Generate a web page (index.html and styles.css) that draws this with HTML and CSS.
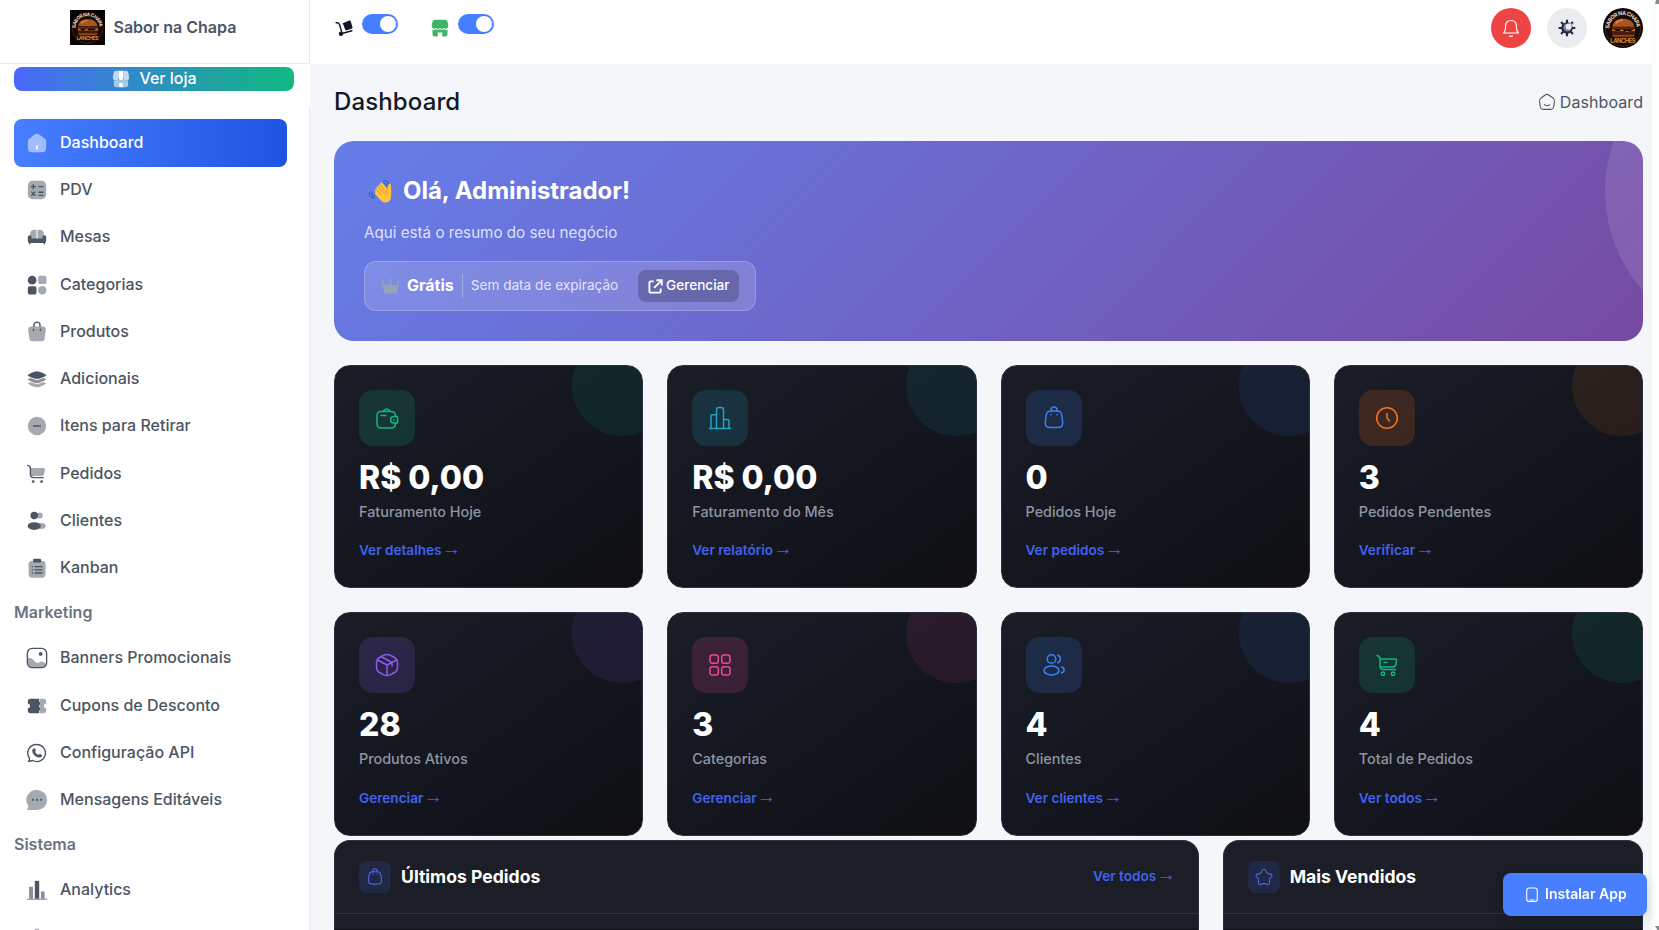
FILE: index.html
```html
<!DOCTYPE html>
<html lang="pt-BR">
<head>
<meta charset="utf-8">
<title>Dashboard - Sabor na Chapa</title>
<link rel="stylesheet" href="styles.css">
</head>
<body>
<svg class="defs" aria-hidden="true">
  <defs>
    <path id="arc" d="M9.500 31a20.500 20.500 0 0 1 41 0"/>
    <symbol id="logo" viewBox="0 0 60 60">
      <rect width="60" height="60" fill="#080504"/>
      <circle cx="30" cy="31" r="26.500" fill="#160b06" stroke="#4a1f12" stroke-width="1.500"/>
      <text class="logo-arc"><textPath href="#arc" textLength="62">SABOR NA CHAPA</textPath></text>
      <path d="M14 28c1-9 8-12 16-12s16 3 17 12z" fill="#a8561f"/>
      <path d="M19 23c3-4 7-5 11-5" stroke="#d8924e" stroke-width="2" fill="none"/>
      <path d="M13 29h35v3H13z" fill="#6d2410"/>
      <path d="M14 31l8 5 6-4 8 5 12-6v4H14z" fill="#c9822a"/>
      <path d="M13 36h35v4H13z" fill="#4a170c"/>
      <path d="M14 40h33c0 4-4 6-8 6H22c-4 0-8-2-8-6z" fill="#8f4519"/>
      <path d="M9 43h42v10H9z" fill="#160b06" opacity=".75"/>
      <text x="30" y="52" text-anchor="middle" textLength="38" class="logo-name">LANCHES</text>
    </symbol>
    <symbol id="bag" viewBox="0 0 24 24">
      <path d="M3.700 12.500c.4-3.600.6-5.400 1.900-6.500S8.700 5 12 5s5.100-.1 6.400 1 1.500 2.900 1.900 6.500c.5 4.200.7 6.300-.5 7.700S16.600 21.500 12 21.500s-6.600.1-7.800-1.300-.9-3.500-.5-7.700z"/>
      <path d="M9 5V4a3 3 0 0 1 6 0v1M9 8.500v.2M15 8.500v.2"/>
    </symbol>
  </defs>
</svg>

<div class="app">
  <aside class="sidebar">
    <div class="brand"><svg class="brand-logo"><use href="#logo"/></svg><span>Sabor na Chapa</span></div>
    <div class="store-wrap">
      <a class="store-btn">
        <svg class="ic18" viewBox="0 0 24 24" fill="#fff"><path opacity=".7" d="M6 1h3v9a3.800 3.800 0 0 1-7.800 0L2 4.500C2.500 2 3.500 1 6 1zM15 1h3c2.500 0 3.500 1 4 3.500l.8 5.500A3.800 3.800 0 0 1 15 10z"/><path d="M9 1h6v9.500a3 3 0 0 1-6 0zM9.500 17h5v6h-5z"/><path opacity=".55" d="M2.500 13.800c2 .6 5 .3 6.500-1.500 1.500 1.700 4.500 1.700 6 0 1.500 1.800 4.500 2.100 6.500 1.500V19c0 3-1 4-4 4h-3v-6h-5v6h-3c-3 0-4-1-4-4z"/></svg>
        <span>Ver loja</span>
      </a>
    </div>
    <nav class="menu">
      <a class="item active"><svg viewBox="0 0 24 24"><path class="soft" fill-rule="evenodd" d="M2 12c0-3 .3-4 2.500-5.500l4-3C10 2.300 10.500 2 12 2s2 .3 3.500 1.500l4 3C21.700 8 22 9 22 12v4c0 5-1.200 6-6 6H8c-4.800 0-6-1-6-6z"/><path d="M11.100 14.500h1.800V19h-1.800z"/></svg><span>Dashboard</span></a>
      <a class="item"><svg viewBox="0 0 24 24"><rect class="soft" x="2" y="2" width="20" height="20" rx="5"/><path class="line" d="M5.800 8.300h4.400M8 6.100v4.400M14 8.300h4.500M6.400 14.300l3.200 3.400M9.600 14.300l-3.200 3.400M14 14.500h4.500M14 17.800h4.500"/></svg><span>PDV</span></a>
      <a class="item"><svg viewBox="0 0 24 24"><path class="soft" d="M4.500 11V8.500a4.500 4.500 0 0 1 4.500-4.500h2.400v11H6.500zM12.600 4H15a4.500 4.500 0 0 1 4.500 4.500V11l-2 4h-4.900z"/><path d="M2 12a2 2 0 0 1 4 0v1.500h12V12a2 2 0 0 1 4 0v4c0 1-.4 1.800-1.200 2.200V20h-1.600v-1.500H4.800V20H3.200v-1.800C2.400 17.800 2 17 2 16z"/></svg><span>Mesas</span></a>
      <a class="item"><svg viewBox="0 0 24 24"><circle cx="6.700" cy="6.700" r="4.700"/><rect class="soft" x="13.300" y="2" width="9" height="9" rx="2"/><rect x="2" y="13.300" width="9.400" height="9" rx="2"/><circle class="soft" cx="17.700" cy="17.700" r="4.600"/></svg><span>Categorias</span></a>
      <a class="item"><svg viewBox="0 0 24 24"><path class="soft" d="M2.500 11c-.4-3.500.5-5 4-5h11c3.500 0 4.400 1.500 4 5l-1.200 8c-.4 2.300-1 3-3.300 3H7c-2.300 0-2.900-.7-3.300-3z"/><path class="line" d="M8.700 6V4.500a3.300 3.300 0 0 1 6.600 0V6M8.200 9v1.400M15.800 9v1.400"/></svg><span>Produtos</span></a>
      <a class="item"><svg viewBox="0 0 24 24"><path class="soft" d="M2 16.500l3-1 7 2.300 7-2.300 3 1c0 1.200-7.500 4.500-10 4.500S2 17.700 2 16.500z"/><path class="mid" d="M2 12l3-1 7 2.300 7-2.300 3 1c0 1.500-7.500 4.500-10 4.500S2 13.500 2 12z"/><path d="M2 8c0-1.300 7.500-4.500 10-4.500S22 6.700 22 8s-7.500 4-10 4S2 9.300 2 8z"/></svg><span>Adicionais</span></a>
      <a class="item"><svg viewBox="0 0 24 24"><circle class="soft" cx="12" cy="12" r="10"/><path class="line" d="M8.300 12h7.400"/></svg><span>Itens para Retirar</span></a>
      <a class="item"><svg viewBox="0 0 24 24"><path class="soft" d="M4.800 5.500h13.700c2 0 2.600 1 2 3l-1.200 4.200c-.4 1.300-1 1.600-2.300 1.600H5z"/><path class="line" d="M1.800 2.600c2.300.3 3 1 3 3.400v6c0 3 .8 3.900 3.700 3.900h10.200"/><circle cx="7.800" cy="20.200" r="1.500"/><circle cx="17" cy="20.200" r="1.500"/></svg><span>Pedidos</span></a>
      <a class="item"><svg viewBox="0 0 24 24"><circle class="soft" cx="15" cy="6" r="3.200"/><ellipse class="soft" cx="16.500" cy="17.500" rx="5" ry="3.200"/><circle cx="9" cy="6" r="4.100"/><ellipse cx="9" cy="17.500" rx="7.200" ry="4.200"/></svg><span>Clientes</span></a>
      <a class="item"><svg viewBox="0 0 24 24"><rect class="soft" x="2.800" y="4" width="18.600" height="18.500" rx="4"/><rect x="7.800" y="2" width="8.600" height="4" rx="1.300"/><path class="line" d="M10 10.500h7.500M10 14h7.500M10 17.500h7.500M6.800 10.500h.3M6.800 14h.3M6.800 17.500h.3"/></svg><span>Kanban</span></a>
      <h6 class="section">Marketing</h6>
      <a class="item"><svg viewBox="0 0 24 24"><path class="soft" d="M2 12.500c3-1.500 5.500.2 8 3.500 1.800 1.700 2.800 1.600 5 .5 3-1.500 4.500-.2 6.800 2.200-1 3-3.800 3.800-9.800 3.800-8 0-10-1.500-10-10z"/><rect class="line" x="1.500" y="1.500" width="21" height="21" rx="5.500"/><circle cx="16" cy="7.500" r="2.100"/></svg><span>Banners Promocionais</span></a>
      <a class="item"><svg viewBox="0 0 24 24"><path class="soft" d="M15.300 4H19a3 3 0 0 1 3 3v2.500a2.500 2.500 0 0 0 0 5V17a3 3 0 0 1-3 3h-3.700z"/><path d="M5 4h9.500v3.500h.8v3h-.8v3h.8v3h-.8V20H5a3 3 0 0 1-3-3v-2.500a2.500 2.500 0 0 0 0-5V7a3 3 0 0 1 3-3z"/></svg><span>Cupons de Desconto</span></a>
      <a class="item"><svg viewBox="0 0 24 24"><path class="line" d="M12 2.700a9.300 9.300 0 1 1-4.500 17.500c-1.500 0-3 1-4.500 1 .8-1.500 1-2.500.6-4A9.300 9.300 0 0 1 12 2.700z"/><path d="M8.700 6.800c1-.3 1.500.5 2 2 .4 1-.8 1.300-.6 2 .6 1.400 1.800 2.500 3.200 3 .8.200 1-1 1.900-.8 1.500.5 2.600 1 2.300 1.900-.7 2.300-3 2.600-5.500 1.500-3-1.400-5-4-5.200-6.700 0-1.500.7-2.500 1.900-2.900z"/></svg><span>Configuração API</span></a>
      <a class="item"><svg viewBox="0 0 24 24"><path class="soft" d="M12 1a11 11 0 0 1 0 22H1.500c-.5 0-.5-.6 0-1.200.9-1 1.400-2.300.8-3.700A11 11 0 0 1 12 1z"/><path d="M6.500 10.700h2v2h-2zM11 10.700h2v2h-2zM15.500 10.700h2v2h-2z"/></svg><span>Mensagens Editáveis</span></a>
      <h6 class="section">Sistema</h6>
      <a class="item"><svg viewBox="0 0 24 24"><path class="mid" d="M3.300 8.500h4.300v13H3.300zM16.300 13.500h4v8h-4z"/><path d="M9.600 2h4.800v19.500H9.600z"/><path class="mid" d="M1 21.500h22v1.200H1z"/></svg><span>Analytics</span></a>
      <a class="item last"><svg viewBox="0 0 24 24"><path class="soft" d="M10 1.800h4l1.200 3.200 3 1.500 3-.5 1 4v5l-3 6-7 1-8-2-3-5V8l5-2 2.600-1z"/></svg><span>Configurações</span></a>
    </nav>
  </aside>

  <div class="main">
    <header class="topbar">
      <div class="switches">
        <div class="switch-group">
          <svg class="ic18 trolley" viewBox="0 0 24 24" fill="#111827"><path d="M10 5.500l8.500-3.200c1.500-.5 2.300 0 2.700 1.300l2 7c.4 1.400 0 2-1.300 2.500l-6 1.900c-1.300.4-2 .2-2.500-1.200l-2.300-6z"/><path d="M1.500 5c3-.3 4 .5 4.600 2.500l2.600 9M10.500 19l12-3.300" fill="none" stroke="#111827" stroke-width="2" stroke-linecap="round"/><circle cx="8" cy="19.700" r="3"/></svg>
          <span class="switch"></span>
        </div>
        <div class="switch-group">
          <svg class="ic18 shop" viewBox="0 0 24 24" fill="#42b36b"><path d="M5 1h14c2 0 2.800 1.300 3.300 3.500l.9 5.300a3.500 3.500 0 0 1-5.700 2.200 4 4 0 0 1-5.500 0 4 4 0 0 1-5.500 0 3.500 3.500 0 0 1-5.700-2.200l.9-5.300C2.200 2.300 3 1 5 1z"/><path d="M2 14.300c1.500.4 3 .2 4.500-.6 1.800.9 3.700.9 5.500 0 1.800.9 3.700.9 5.500 0 1.500.8 3 1 4.500.6V20c0 2.300-1 3.300-3.500 3.300H15V18H9v5.300H5.500C3 23.300 2 22.300 2 20z"/></svg>
          <span class="switch"></span>
        </div>
      </div>
      <div class="actions">
        <button class="round bell"><svg viewBox="0 0 24 24"><path d="M3 18c2-1.500 2.500-3.500 2.500-8C5.500 5.500 8 3 12 3s6.500 2.500 6.500 7c0 4.500.5 6.500 2.500 8zM10.300 21.500c1 .7 2.400.7 3.400 0"/></svg></button>
        <button class="round theme"><svg viewBox="0 0 24 24"><path d="M12 2v4M12 18v4M2 12h4M18 12h4M4.900 4.900l2.500 2.500M16.600 16.600l2.500 2.500M4.900 19.100l2.500-2.500M17.300 6.700l1.800-1.800" stroke="#1e2640" stroke-width="2.600"/><circle cx="12" cy="12" r="7" fill="#1e2640"/><circle cx="12.500" cy="11.500" r="4.800" fill="#76809a"/><circle cx="14" cy="10.300" r="3.700" fill="#ebecef"/></svg></button>
        <div class="round avatar"><svg viewBox="0 0 60 60"><use href="#logo"/></svg></div>
      </div>
    </header>

    <main class="content">
      <div class="page-head">
        <h1>Dashboard</h1>
        <div class="crumb"><svg viewBox="0 0 24 24"><path d="M5 6l4.500-3.300c1.800-1.300 3.200-1.300 5 0L19 6c3 2.200 3.300 3 2.800 6.500l-.7 5c-.5 3.500-1.300 4.300-5 4.300H7.900c-3.700 0-4.500-.8-5-4.300l-.7-5C1.700 9 2 8.200 5 6zM8.500 15.500c2 1.700 5 1.700 7 0"/></svg><span>Dashboard</span></div>
      </div>

      <section class="hero">
        <h2><svg class="wave" viewBox="0 0 28 28"><path d="M1.500 15.500c0 3.500 2 5.500 5.500 6M4 14.500c0 2.500 1.300 4 3.500 4.500M18 2c3 0 5 2 5 5M17 4.500c2 .2 3.300 1.300 3.700 3" fill="none" stroke="#2166b5" stroke-width="1.300" stroke-linecap="round"/><path d="M8 17l7 7.500c3 3 8 2.300 10-1.200 1.200-2.200 1-5.500 1-8.800l-.2-7.500c-.2-2.400-3-2.200-3.200 0l-.6 4.500-5.600-7c-1.400-1.500-3.600.2-2.500 1.900-1.500-1-3.300.6-2.200 2.200-1.600-.7-3.100 1-2 2.500-1.600-.2-2.500 1.500-1.400 2.800z" fill="#ffc23d"/><path d="M13.500 6.500l5 6.500M11.500 9l5 6M9.500 11.500l4.600 5.500M21.800 12c-2 1.500-2.500 3.500-1.800 5.500" stroke="#d8922a" stroke-width="1" fill="none" stroke-linecap="round"/></svg><span>Olá, Administrador!</span></h2>
        <p>Aqui está o resumo do seu negócio</p>
        <div class="plan">
          <svg class="crown" viewBox="0 0 20 18"><path d="M3.500 16.500L1 5.500l4.500 3L7 6l1 2.500L10 3l2 5.500L13 6l1.500 2.500 4.500-3-2.500 11z" fill="#94a3b8"/><circle cx="1.700" cy="4.200" r="1.400" fill="#94a3b8"/><circle cx="10" cy="2.500" r="1.400" fill="#94a3b8"/><circle cx="18.300" cy="4.200" r="1.400" fill="#94a3b8"/></svg>
          <strong>Grátis</strong>
          <span class="expires">Sem data de expiração</span>
          <a class="manage"><svg viewBox="0 0 16 16"><path d="M6 2.500H2.800a1.300 1.300 0 0 0-1.300 1.300v9.400a1.300 1.300 0 0 0 1.300 1.300h9.400a1.300 1.300 0 0 0 1.300-1.300V10M9 1.300h5.700V7M14.300 1.700L6.500 9.500"/></svg><span>Gerenciar</span></a>
        </div>
      </section>

      <section class="stats">
        <article class="card green"><div class="tile"><svg viewBox="0 0 24 24"><path d="M20.500 10.500c0-3.500-1.200-5-4.500-5H7c-4 0-5 1-5 5v6.500c0 4 1 5 5 5h9c3.300 0 4.500-1.500 4.500-5M6 9.500h5M7.500 5.500L10 3.600c1.300-1 2.200-1 3.500 0L16 5.500M22.500 10.500h-3.700a3.200 3.200 0 0 0 0 6.400h3.700zM18.700 13.700h.3"/></svg></div><div class="value">R$ 0,00</div><div class="label">Faturamento Hoje</div><a class="link">Ver detalhes <i>→</i></a></article>
        <article class="card cyan"><div class="tile"><svg viewBox="0 0 24 24"><path d="M1.500 22.500h21M3 22.500V10.300C3 9.300 3.500 8.800 4.500 8.800h4M8.500 22.500V4c0-2 .5-2.500 2.500-2.500h2c2 0 2.500.5 2.500 2.500v18.500M15.500 13.500H19c1.500 0 2 .5 2 2v7"/></svg></div><div class="value">R$ 0,00</div><div class="label">Faturamento do Mês</div><a class="link">Ver relatório <i>→</i></a></article>
        <article class="card blue"><div class="tile"><svg><use href="#bag"/></svg></div><div class="value">0</div><div class="label">Pedidos Hoje</div><a class="link">Ver pedidos <i>→</i></a></article>
        <article class="card orange"><div class="tile"><svg viewBox="0 0 24 24"><circle cx="12" cy="12" r="10.300"/><path d="M12 7.500V12l2.500 3"/></svg></div><div class="value">3</div><div class="label">Pedidos Pendentes</div><a class="link">Verificar <i>→</i></a></article>
        <article class="card purple"><div class="tile"><svg viewBox="0 0 24 24"><path d="M15.600 2.400l3 1.600C22 5.700 22.500 7 22.500 10.500v3c0 3.500-.5 4.800-3.900 6.500l-3 1.600c-3 1.600-4.200 1.600-7.200 0l-3-1.600C2 18.300 1.500 17 1.500 13.500v-3C1.500 7 2 5.700 5.400 4l3-1.600c3-1.600 4.200-1.600 7.200 0zM21.500 7L12 12 2.500 7M12 12v10.500M17 9.500v3.500M17 9.500L7 4"/></svg></div><div class="value">28</div><div class="label">Produtos Ativos</div><a class="link">Gerenciar <i>→</i></a></article>
        <article class="card pink"><div class="tile"><svg viewBox="0 0 24 24"><rect x="2" y="2" width="8.300" height="8.300" rx="2.300"/><rect x="13.700" y="2" width="8.300" height="8.300" rx="2.300"/><rect x="2" y="13.700" width="8.300" height="8.300" rx="2.300"/><rect x="13.700" y="13.700" width="8.300" height="8.300" rx="2.300"/></svg></div><div class="value">3</div><div class="label">Categorias</div><a class="link">Gerenciar <i>→</i></a></article>
        <article class="card blue"><div class="tile"><svg viewBox="0 0 24 24"><circle cx="9.500" cy="6" r="4.300"/><ellipse cx="9.500" cy="17.500" rx="7.500" ry="4.500"/><path d="M15.800 2.200a4 4 0 0 1 0 7.500M19.500 14c3.300.7 3.700 4.500 0 6"/></svg></div><div class="value">4</div><div class="label">Clientes</div><a class="link">Ver clientes <i>→</i></a></article>
        <article class="card green"><div class="tile"><svg viewBox="0 0 24 24"><path d="M2 2.500c2.500.5 3 1.500 3 4v5.500c0 4 .8 4.500 4.500 4.500h11M5 6h14.500c2 0 2.500.8 2 2.800l-.8 3.200c-.5 1.500-1 2-2.500 2H5.500M9 9.500h3"/><circle cx="8" cy="20.700" r="1.700"/><circle cx="18" cy="20.700" r="1.700"/></svg></div><div class="value">4</div><div class="label">Total de Pedidos</div><a class="link">Ver todos <i>→</i></a></article>
      </section>

      <section class="panels">
        <article class="panel">
          <header><div class="mini"><svg><use href="#bag"/></svg></div><h3>Últimos Pedidos</h3><a class="link">Ver todos <i>→</i></a></header>
          <div class="panel-body"></div>
        </article>
        <article class="panel">
          <header><div class="mini"><svg viewBox="0 0 24 24"><path d="M8.500 5.500c1.800-5 5.200-5 7 0 .4 1.300 1 1.800 2.500 2 5.300.7 6 2.500 2.500 5.800-1.300 1.300-1.500 2-1.200 4 .8 5-1 6-5 3.800-1.600-.8-3-.8-4.600 0-4 2.200-5.800 1.200-5-3.800.3-2 .1-2.700-1.200-4C0 10 .7 8.200 6 7.500c1.500-.2 2.100-.7 2.500-2z"/></svg></div><h3>Mais Vendidos</h3></header>
          <div class="panel-body"></div>
        </article>
      </section>
    </main>
  </div>
  <div class="scroll"><span class="tri up"></span><span class="tri down"></span></div>
</div>

<button class="install"><svg viewBox="0 0 12 16"><rect x=".7" y="1" width="10.600" height="13.500" rx="2.600"/><path d="M3.500 13h5"/></svg><span>Instalar App</span></button>
</body>
</html>
```
FILE: styles.css
```css
* { box-sizing: border-box; }
body { margin: 0; height: 930px; overflow: hidden; background: #f5f6fa; font-family: Inter, "Liberation Sans", sans-serif; font-size: 16px; color: #4b5563; }
h1, h2, h3, h6, p { margin: 0; }
button { border: 0; padding: 0; font-family: inherit; }
svg { display: block; flex: none; }
.defs { position: absolute; width: 0; height: 0; }
.ic18 { width: 18px; height: 18px; }
.logo-arc { font-size: 8px; font-weight: 700; fill: #e8dccb; }
.logo-name { font-size: 9px; font-weight: 700; fill: #d58a34; }

.app { display: flex; height: 930px; overflow: hidden; }

/* Sidebar */
.sidebar { width: 310px; flex: none; display: flex; flex-direction: column; height: 930px; overflow: hidden; background: #fff; }
.brand { height: 64px; flex: none; display: flex; align-items: flex-start; gap: 8.500px; padding: 10px 0 0 70px; border-right: 1px solid #e8e9ee; border-bottom: 1px solid #e8e9ee; font-weight: 600; line-height: 35px; }
.brand-logo { width: 35px; height: 35px; }
.store-wrap { height: 43px; flex: none; padding: 3px 16px 0 14px; }
.store-btn { height: 24px; display: flex; align-items: center; justify-content: center; gap: 9px; padding-left: 1px; border-radius: 8px; background: linear-gradient(90deg, #4a68fa, #10b981); color: #fff; font-weight: 500; line-height: 22px; }
.store-btn span { padding-bottom: 2px; }
.menu { flex: 1; min-height: 0; padding: 12.300px 22px 0 14px; border-right: 1px solid #e8ebf2; }
.item { height: 47.250px; display: flex; align-items: center; gap: 12px; padding: 0 12px; border-radius: 8px; font-weight: 500; line-height: 24px; white-space: nowrap; }
.item svg { width: 22px; height: 22px; fill: #4b5563; }
.item span { padding-bottom: 2px; }
.item.last span { padding-bottom: 0; }
.item.active { color: #fff; background: linear-gradient(90deg, #487fff, #1e54e2); }
.item.active svg { fill: #fff; }
.item .soft { opacity: .5; }
.item .mid { opacity: .65; }
.item .line { fill: none; stroke: #4b5563; stroke-width: 1.500; stroke-linecap: round; }
.section { height: 43px; line-height: 41px; font-size: 16px; font-weight: 600; color: #6b7280; }

/* Top bar */
.main { flex: 1; min-width: 0; }
.topbar { height: 64px; display: flex; justify-content: space-between; padding: 8px 9px 0 25px; background: #fff; }
.switches { display: flex; gap: 33px; }
.switch-group { display: flex; gap: 9px; padding-top: 6px; height: 32px; }
.switch-group svg { margin-top: 4.500px; }
.switch { width: 36px; height: 20px; border-radius: 10px; background: #487fff; padding: 2px; display: flex; justify-content: flex-end; }
.switch::after { content: ""; width: 16px; height: 16px; border-radius: 50%; background: #fff; }
.actions { display: flex; gap: 16px; }
.round { width: 40px; height: 40px; border-radius: 50%; display: grid; place-items: center; overflow: hidden; }
.bell { background: #ef4444; }
.bell svg { width: 20px; height: 20px; fill: none; stroke: #fff; stroke-width: 1.400; stroke-linejoin: round; stroke-linecap: round; }
.theme { background: #ebecef; }
.theme svg { width: 20px; height: 20px; }
.avatar svg { width: 40px; height: 40px; }

/* Content */
.content { padding: 20px 9px 0 24px; }
.page-head { height: 36px; display: flex; align-items: center; justify-content: space-between; }
.page-head h1 { font-size: 24px; line-height: 36px; font-weight: 500; letter-spacing: .13px; color: #111827; }
.crumb { display: flex; align-items: center; gap: 4px; letter-spacing: .07px; }
.crumb svg { width: 18px; height: 18px; fill: none; stroke: #4b5563; stroke-width: 1.400; stroke-linecap: round; }
.hero { position: relative; height: 200px; margin-top: 21px; padding: 31px 30px 0; border-radius: 20px; overflow: hidden; background: linear-gradient(135deg, #667eea 0%, #764ba2 100%); color: #fff; }
.hero::before { content: ""; position: absolute; width: 300px; height: 300px; top: -100px; right: -262px; border-radius: 50%; background: rgba(255,255,255,.1); }
.hero h2 { display: flex; align-items: center; gap: 10px; height: 38px; font-size: 24px; font-weight: 700; line-height: 38px; letter-spacing: -.03px; }
.wave { width: 25px; height: 25px; margin-left: 4px; }
.hero p { margin-top: 11px; height: 24px; line-height: 24px; font-size: 15.200px; color: rgba(255,255,255,.8); }
.plan { width: 392px; height: 50px; margin-top: 16px; display: flex; align-items: center; padding: 0 16px; border: 1px solid rgba(255,255,255,.2); border-radius: 12px; background: rgba(255,255,255,.15); }
.crown { width: 19px; height: 17px; }
.plan strong { margin-left: 7px; padding-bottom: 2px; font-size: 16px; font-weight: 700; }
.expires { height: 24px; line-height: 23px; margin-left: 8px; padding-left: 8px; border-left: 1px solid rgba(255,255,255,.3); font-size: 13.600px; color: rgba(255,255,255,.8); white-space: nowrap; }
.manage { margin-left: auto; width: 101px; height: 32px; display: flex; align-items: center; gap: 3px; padding-left: 10px; border-radius: 8px; background: rgba(0,0,0,.2); font-size: 13.600px; font-weight: 500; }
.manage span { padding-bottom: 2px; }
.manage svg { width: 15px; height: 15px; fill: none; stroke: #fff; stroke-width: 2; }

.stats { margin-top: 24px; display: grid; grid-template-columns: repeat(4, 1fr); grid-template-rows: 223px 224px; gap: 24px; }
.card { position: relative; overflow: hidden; padding: 24px; border: 1px solid #2b3040; border-radius: 16px; background: linear-gradient(145deg, #1a1d26 0%, #11141b 70%, #101012 100%); }
.card::before { content: ""; position: absolute; top: -30px; right: -30px; width: 100px; height: 100px; border-radius: 50%; background: var(--tone); opacity: .1; }
.tile { position: relative; width: 56px; height: 56px; border-radius: 14px; display: grid; place-items: center; color: var(--tone); }
.tile::before { content: ""; position: absolute; inset: 0; border-radius: 14px; background: var(--tone); opacity: .17; }
.tile svg, .mini svg { width: 24px; height: 24px; fill: none; stroke: currentColor; stroke-width: 1.500; stroke-linecap: round; stroke-linejoin: round; }
.green { --tone: #10b981; }
.cyan { --tone: #1ea5c4; }
.blue { --tone: #3b82f6; }
.orange { --tone: #f97316; }
.purple { --tone: #8b5cf6; }
.pink { --tone: #ec4899; }
.value { margin-top: 13px; line-height: 38px; font-size: 32px; font-weight: 800; color: #fff; }
.label { margin-top: 3px; line-height: 23px; font-size: 14.400px; font-weight: 500; color: #8e95a3; }
.link { display: block; height: 24px; margin-top: 15px; line-height: 24px; font-size: 13.600px; font-weight: 600; color: #4361ee; white-space: nowrap; }
.link i { margin: 0 -2px 0 -3px; font-style: normal; font-weight: 400; font-size: 19px; font-family: "Liberation Sans", Arial, sans-serif; line-height: 1; }
.stats .card:nth-child(n+5) .link { margin-top: 16px; }

.panels { margin-top: 4px; display: grid; grid-template-columns: 864.670px 1fr; gap: 24px; }
.panel { height: 90px; overflow: hidden; border: 1px solid #2b3040; border-bottom: 0; border-radius: 16px 16px 0 0; background: #1b1e27; }
.panel header { height: 73px; display: flex; align-items: center; padding: 0 24px; border-bottom: 1px solid #2d3140; }
.mini { width: 32px; height: 32px; border-radius: 8px; display: grid; place-items: center; background: #212845; color: #4c6af2; }
.mini svg { width: 18px; height: 18px; stroke-width: 1.400; }
.panel h3 { margin-left: 10px; padding-bottom: 2px; font-size: 17.600px; font-weight: 700; color: #fff; }
.panel .link { margin: 0 0 2px auto; }
.panel-body { margin-top: 15px; height: 1px; background: #11131a; }

.scroll { width: 7px; display: flex; flex-direction: column; justify-content: space-between; align-items: flex-end; background: #fcfdfd; }
.tri { width: 4px; height: 4px; background: #858c94; }
.tri.up { clip-path: polygon(25% 0, 100% 0, 100% 100%, 0 100%); }
.tri.down { clip-path: polygon(0 0, 100% 0, 100% 100%, 60% 100%); }

.install { position: fixed; right: 12px; bottom: 14px; width: 144px; height: 43px; display: flex; align-items: center; gap: 7px; padding-left: 23px; border-radius: 8px; background: #487fff; color: #fff; font-size: 14px; font-weight: 600; box-shadow: 0 4px 12px rgba(0,0,0,.15); }
.install span { padding-bottom: 2px; }
.install svg { width: 12px; height: 16px; fill: none; stroke: #fff; stroke-width: 1.100; }
```
